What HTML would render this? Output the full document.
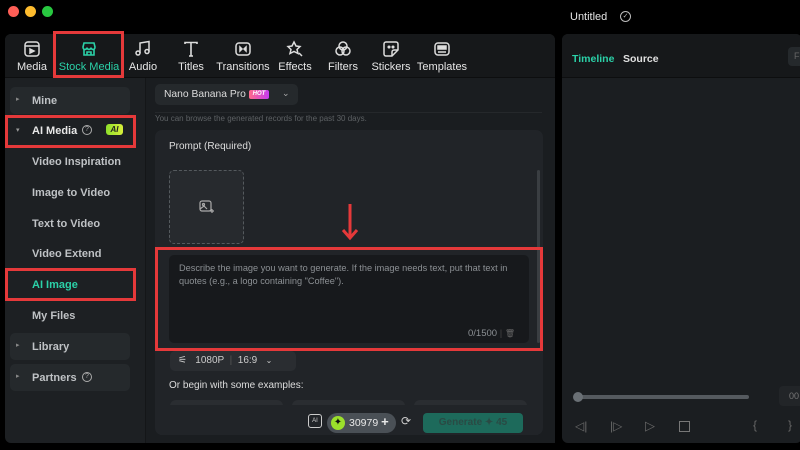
<!DOCTYPE html>
<html><head><style>
*{box-sizing:border-box;margin:0;padding:0}
body{width:800px;height:450px;background:#000;font-family:"Liberation Sans",sans-serif;position:relative;overflow:hidden;color:#ddd}
.a{position:absolute}
.red{position:absolute;border:3px solid #e5393a}
.tab{position:absolute;top:40px;width:60px;text-align:center;font-size:11px;color:#e6e6e6}
.tab svg{display:block;margin:0 auto 3px}
.si{position:absolute;left:32px;font-size:11px;font-weight:bold;color:#bfc2c5}
.grp{position:absolute;left:10px;width:120px;height:27px;background:#25292c;border-radius:5px}
.grp span{position:absolute;left:6px;top:8px;font-size:7px;color:#888}
</style></head><body>
<div class="a" style="left:8px;top:6px;width:11px;height:11px;border-radius:50%;background:#fe5f57"></div>
<div class="a" style="left:25px;top:6px;width:11px;height:11px;border-radius:50%;background:#febc2e"></div>
<div class="a" style="left:42px;top:6px;width:11px;height:11px;border-radius:50%;background:#28c840"></div>
<div class="a" style="left:570px;top:11px;font-size:11px;color:#e6e6e6">Untitled</div>
<div class="a" style="left:620px;top:11px;width:11px;height:11px;border:1px solid #bbb;border-radius:50%;font-size:7px;text-align:center;line-height:9px;color:#bbb">✓</div>

<div class="a" style="left:5px;top:34px;width:550px;height:409px;background:#1d2023;border-radius:6px"></div>
<div class="a" style="left:5px;top:34px;width:550px;height:44px;background:#16181a;border-radius:6px 6px 0 0;border-bottom:1px solid #0d0e0f"></div>
<div class="a" style="left:145px;top:78px;width:410px;height:365px;background:#1a1d20;border-left:1px solid #141618"></div>

<div class="tab" style="left:2px"><svg width="18" height="18" viewBox="0 0 18 18" fill="none" stroke="#ddd" stroke-width="1.5"><rect x="2" y="2" width="14" height="14" rx="3"/><path d="M2 6h14"/><path d="M7 9l4 2-4 2z" fill="#ddd"/></svg>Media</div>
<div class="tab" style="left:56px;width:66px;color:#2bd1a8"><svg width="18" height="18" viewBox="0 0 18 18" fill="none" stroke="#2bd1a8" stroke-width="1.6"><path d="M3 7l1-4h10l1 4c0 1.5-1 2.5-2 2.5s-2-1-2-2c0 1-1 2-2 2s-2-1-2-2c0 1-1 2-2 2S3 8.5 3 7z"/><path d="M4 9.5V15h10V9.5"/><path d="M7 15v-3h4v3"/></svg>Stock Media</div>
<div class="tab" style="left:113px"><svg width="18" height="18" viewBox="0 0 18 18" fill="none" stroke="#ddd" stroke-width="1.5"><path d="M6 13V3l9-1.5v10"/><circle cx="4" cy="13" r="2"/><circle cx="13" cy="11.5" r="2"/></svg>Audio</div>
<div class="tab" style="left:161px"><svg width="18" height="18" viewBox="0 0 18 18" fill="none" stroke="#ddd" stroke-width="1.6"><path d="M3 4V2.5h12V4M9 2.5V16M7 16h4"/></svg>Titles</div>
<div class="tab" style="left:213px"><svg width="18" height="18" viewBox="0 0 18 18" fill="none" stroke="#ddd" stroke-width="1.5"><rect x="2" y="3" width="14" height="12" rx="3"/><path d="M6 7l2 2-2 2zM12 7l-2 2 2 2z" fill="#ddd"/></svg>Transitions</div>
<div class="tab" style="left:265px"><svg width="18" height="18" viewBox="0 0 18 18" fill="none" stroke="#ddd" stroke-width="1.5"><path d="M8 2l2 4 4 .5-3 3 1 4-4-2-4 2 1-4-3-3 4-.5z"/><path d="M13 13l3 3"/></svg>Effects</div>
<div class="tab" style="left:313px"><svg width="18" height="18" viewBox="0 0 18 18" fill="none" stroke="#ddd" stroke-width="1.5"><circle cx="9" cy="6" r="4"/><circle cx="6" cy="11" r="4"/><circle cx="12" cy="11" r="4"/></svg>Filters</div>
<div class="tab" style="left:361px"><svg width="18" height="18" viewBox="0 0 18 18" fill="none" stroke="#ddd" stroke-width="1.5"><path d="M4 2h10a2 2 0 012 2v6l-6 6H4a2 2 0 01-2-2V4a2 2 0 012-2z"/><path d="M10 16v-4a2 2 0 012-2h4"/><circle cx="7" cy="7" r=".8"/><circle cx="11" cy="7" r=".8"/></svg>Stickers</div>
<div class="tab" style="left:412px"><svg width="18" height="18" viewBox="0 0 18 18" fill="none" stroke="#ddd" stroke-width="1.5"><rect x="2" y="3" width="14" height="12" rx="3"/><rect x="5" y="6" width="8" height="3" fill="#ddd"/><path d="M5 12h8"/></svg>Templates</div>
<div class="red" style="left:53px;top:31px;width:71px;height:47px"></div>

<div class="grp" style="top:87px"><span>▸</span></div>
<div class="si" style="top:95px">Mine</div>
<div class="a" style="left:16px;top:126px;font-size:7px;color:#999">▾</div>
<div class="si" style="top:125px;color:#e8e8e8">AI Media</div>
<div class="a" style="left:82px;top:125px;width:10px;height:10px;border:1px solid #aaa;border-radius:50%;font-size:7px;text-align:center;line-height:8px;color:#aaa">?</div>
<div class="a" style="left:106px;top:124px;width:17px;height:11px;background:linear-gradient(90deg,#8ee02b,#d8ef3a);border-radius:3px;font-size:8px;font-weight:bold;font-style:italic;color:#222;text-align:center;line-height:11px">AI</div>
<div class="red" style="left:5px;top:115px;width:131px;height:33px"></div>
<div class="si" style="top:156px">Video Inspiration</div>
<div class="si" style="top:187px">Image to Video</div>
<div class="si" style="top:218px">Text to Video</div>
<div class="si" style="top:248px">Video Extend</div>
<div class="si" style="top:279px;color:#2bd1a8">AI Image</div>
<div class="red" style="left:5px;top:268px;width:131px;height:33px"></div>
<div class="si" style="top:310px">My Files</div>
<div class="grp" style="top:333px"><span>▸</span></div>
<div class="si" style="top:341px">Library</div>
<div class="grp" style="top:364px"><span>▸</span></div>
<div class="si" style="top:372px">Partners</div>
<div class="a" style="left:82px;top:372px;width:10px;height:10px;border:1px solid #aaa;border-radius:50%;font-size:7px;text-align:center;line-height:8px;color:#aaa">?</div>

<div class="a" style="left:155px;top:84px;width:143px;height:21px;background:#25292c;border-radius:5px"></div>
<div class="a" style="left:164px;top:89px;font-size:10.3px;color:#ddd">Nano Banana Pro</div>
<div class="a" style="left:249px;top:90px;width:20px;height:9px;background:linear-gradient(90deg,#ff6a8a,#c73cf0);border-radius:2px;font-size:6px;font-weight:bold;font-style:italic;color:#fff;text-align:center;line-height:9px">HOT</div>
<div class="a" style="left:282px;top:88px;font-size:9px;color:#aaa">⌄</div>
<div class="a" style="left:155px;top:112px;width:387px;height:1px;background:#25282b"></div>
<div class="a" style="left:155px;top:114px;font-size:8px;color:#5d6164">You can browse the generated records for the past 30 days.</div>
<div class="a" style="left:155px;top:130px;width:388px;height:305px;background:#212428;border-radius:7px"></div>
<div class="a" style="left:169px;top:141px;font-size:10px;color:#ddd">Prompt (Required)</div>
<div class="a" style="left:537px;top:170px;width:3px;height:173px;background:#3a3e42;border-radius:2px"></div>
<div class="a" style="left:169px;top:170px;width:75px;height:74px;border:1px dashed #555a5e;border-radius:5px;background:#272a2e"></div>
<svg class="a" style="left:199px;top:200px" width="15" height="14" viewBox="0 0 15 14" fill="none" stroke="#aaa" stroke-width="1.2"><rect x="1" y="1" width="11" height="10" rx="2"/><circle cx="4.5" cy="4.5" r="1"/><path d="M1 9l4-3 3 3M11 11h4M13 9v4"/></svg>
<svg class="a" style="left:341px;top:204px" width="18" height="40" viewBox="0 0 18 40"><path d="M9 0v34M2 26l7 8 7-8" stroke="#e5393a" stroke-width="3" fill="none"/></svg>
<div class="a" style="left:169px;top:255px;width:360px;height:88px;background:#17191c;border-radius:5px"></div>
<div class="a" style="left:179px;top:262px;width:350px;font-size:9.2px;line-height:12.5px;color:#8c9094">Describe the image you want to generate. If the image needs text, put that text in quotes (e.g., a logo containing "Coffee").</div>
<div class="a" style="left:468px;top:328px;font-size:9.5px;color:#8c9094">0/1500 <span style="color:#444">|</span> <span style="font-size:8px;color:#666">🗑</span></div>
<div class="red" style="left:155px;top:247px;width:388px;height:104px"></div>
<div class="a" style="left:170px;top:351px;width:126px;height:20px;background:#2a2d31;border-radius:5px"></div>
<div class="a" style="left:178px;top:355px;font-size:10px;color:#ccc">⚟&nbsp;&nbsp; 1080P <span style="color:#555">&nbsp;|&nbsp;</span> 16:9 &nbsp;&nbsp;<span style="font-size:8px">⌄</span></div>
<div class="a" style="left:169px;top:380px;font-size:10px;color:#ddd">Or begin with some examples:</div>
<div class="a" style="left:170px;top:400px;width:113px;height:20px;background:#2a2d31;border-radius:6px 6px 0 0"></div>
<div class="a" style="left:292px;top:400px;width:113px;height:20px;background:#2a2d31;border-radius:6px 6px 0 0"></div>
<div class="a" style="left:414px;top:400px;width:113px;height:20px;background:#2a2d31;border-radius:6px 6px 0 0"></div>
<div class="a" style="left:160px;top:405px;width:378px;height:30px;background:#212428"></div>
<div class="a" style="left:308px;top:414px;width:14px;height:14px;border:1.2px solid #ccc;border-radius:3px;font-size:6px;color:#ccc;text-align:center;line-height:12px">AI</div>
<div class="a" style="left:327px;top:413px;width:69px;height:20px;background:#4a5056;border-radius:10px"></div>
<div class="a" style="left:331px;top:416px;width:14px;height:14px;background:#9be02b;border-radius:50%;font-size:10px;text-align:center;line-height:14px;color:#111">✦</div>
<div class="a" style="left:349px;top:417px;font-size:10.5px;color:#e8e8e8">30979 <b style="font-size:13px;line-height:10px">+</b></div>
<div class="a" style="left:401px;top:414px;font-size:12px;color:#ccc">⟳</div>
<div class="a" style="left:423px;top:413px;width:100px;height:20px;background:#1d6a5b;border-radius:4px;font-size:10px;font-weight:bold;color:#2a4a44;text-align:center;line-height:20px">Generate ✦ 45</div>

<div class="a" style="left:562px;top:34px;width:240px;height:409px;background:#1b1e21;border-radius:6px"></div>
<div class="a" style="left:562px;top:34px;width:240px;height:44px;background:#16181a;border-radius:6px 6px 0 0;border-bottom:1px solid #0d0e0f"></div>
<div class="a" style="left:572px;top:53px;font-size:10.5px;font-weight:bold;color:#2bd1a8">Timeline</div>
<div class="a" style="left:623px;top:53px;font-size:10.5px;font-weight:bold;color:#e0e0e0">Source</div>
<div class="a" style="left:788px;top:47px;width:20px;height:19px;background:#25292c;border-radius:4px;font-size:9px;color:#666;padding:4px 0 0 6px">F</div>
<div class="a" style="left:577px;top:395px;width:172px;height:4px;background:#555a5f;border-radius:2px"></div>
<div class="a" style="left:573px;top:392px;width:10px;height:10px;background:#6a7075;border-radius:50%"></div>
<div class="a" style="left:779px;top:386px;width:30px;height:20px;background:#222528;border-radius:4px;font-size:9px;color:#777;padding:5px 0 0 10px">00</div>
<div class="a" style="left:575px;top:419px;font-size:12px;color:#666">◁|</div>
<div class="a" style="left:610px;top:419px;font-size:12px;color:#666">|▷</div>
<div class="a" style="left:645px;top:418px;font-size:13px;color:#666">▷</div>
<div class="a" style="left:679px;top:421px;width:11px;height:11px;border:1.3px solid #777"></div>
<div class="a" style="left:753px;top:418px;font-size:12px;color:#666">{</div>
<div class="a" style="left:788px;top:418px;font-size:12px;color:#666">}</div>
</body></html>
